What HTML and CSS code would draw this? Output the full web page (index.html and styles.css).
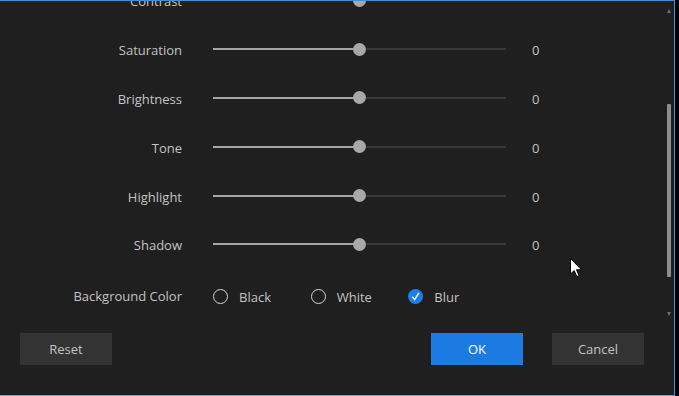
FILE: index.html
```html
<!DOCTYPE html>
<html lang="en">
<head>
    <meta charset="UTF-8">
    <title>Adjust</title>
    <link rel="stylesheet" href="styles.css">
</head>
<body>
    <div class="dialog">
        <div class="main">
            <div class="scroll-area">
                <div class="rows">
                    <div class="row">
                        <span class="label">Contrast</span>
                        <div class="slider"><span class="fill"></span><span class="thumb"></span><span class="rest"></span></div>
                        <span class="value"></span>
                    </div>
                    <div class="row">
                        <span class="label">Saturation</span>
                        <div class="slider"><span class="fill"></span><span class="thumb"></span><span class="rest"></span></div>
                        <span class="value">0</span>
                    </div>
                    <div class="row">
                        <span class="label">Brightness</span>
                        <div class="slider"><span class="fill"></span><span class="thumb"></span><span class="rest"></span></div>
                        <span class="value">0</span>
                    </div>
                    <div class="row">
                        <span class="label">Tone</span>
                        <div class="slider"><span class="fill"></span><span class="thumb"></span><span class="rest"></span></div>
                        <span class="value">0</span>
                    </div>
                    <div class="row">
                        <span class="label">Highlight</span>
                        <div class="slider"><span class="fill"></span><span class="thumb"></span><span class="rest"></span></div>
                        <span class="value">0</span>
                    </div>
                    <div class="row">
                        <span class="label">Shadow</span>
                        <div class="slider"><span class="fill"></span><span class="thumb"></span><span class="rest"></span></div>
                        <span class="value">0</span>
                    </div>
                    <div class="row bg-row">
                        <span class="label">Background Color</span>
                        <div class="options">
                            <label class="option"><span class="radio"></span>Black</label>
                            <label class="option"><span class="radio"></span>White</label>
                            <label class="option"><span class="radio checked"><svg width="15" height="15" viewBox="0 0 15 15"><path d="M4.2 7.6 L6.6 10.6 L10.9 3.8" fill="none" stroke="#fff" stroke-width="1.3"/></svg></span>Blur</label>
                        </div>
                    </div>
                </div>
            </div>
            <div class="scrollbar">
                <span class="arrow up"></span>
                <span class="thumb-bar"></span>
                <span class="arrow down"></span>
            </div>
        </div>
        <div class="footer">
            <button class="btn">Reset</button>
            <span class="spacer"></span>
            <button class="btn primary">OK</button>
            <button class="btn">Cancel</button>
        </div>
        <svg class="cursor" width="13" height="20" viewBox="0 0 13 20"><path d="M0.5 0.5 L0.5 16 L4.2 12.6 L6.8 18.6 L9 17.6 L6.5 11.8 L11.5 11.8 Z" fill="#fff" stroke="#000" stroke-width="1"/></svg>
    </div>
</body>
</html>
```

FILE: styles.css
```css
body {
    margin: 0;
    background-color: #000;
    font-family: "Open Sans", "Noto Sans", sans-serif;
    font-size: 13px;
}
.dialog {
    position: relative;
    width: 675px;
    height: 396px;
    box-sizing: border-box;
    background-color: #1f1f1f;
    border-top: 1px solid #3f8fde;
    border-right: 1px solid #3f8fde;
    border-bottom: 1px solid #6aa6dc;
    display: flex;
    flex-direction: column;
}
.main {
    display: flex;
    height: 321px;
}
.scroll-area {
    flex: 1;
    overflow: hidden;
}
.rows {
    margin-top: -24px;
}
.row {
    display: grid;
    grid-template-columns: 182px 293px auto;
    column-gap: 31px;
    align-items: center;
    height: 48.8px;
}
.label {
    text-align: right;
    color: #c3c3c3;
}
.value {
    color: #c3c3c3;
    margin-left: -5px;
}
.slider {
    display: flex;
    align-items: center;
    height: 13px;
    margin-bottom: 2px;
}
.fill {
    flex: 1;
    height: 2px;
    background-color: #a6a6a6;
}
.rest {
    flex: 1;
    height: 2px;
    background-color: #383838;
}
.thumb {
    position: relative;
    z-index: 1;
    width: 13px;
    height: 13px;
    margin: 0 -6.5px;
    border-radius: 50%;
    background-color: #a8a8a8;
}
.bg-row {
    height: 52px;
}
.options {
    display: flex;
    margin-top: 2px;
}
.option {
    display: flex;
    align-items: center;
    gap: 11px;
    width: 98px;
    color: #c3c3c3;
}
.radio {
    width: 15px;
    height: 15px;
    box-sizing: border-box;
    border: 1.5px solid #d4d4d4;
    border-radius: 50%;
}
.radio.checked {
    border: none;
    background-color: #1c7fe6;
}
.radio svg {
    display: block;
}
.scrollbar {
    width: 10px;
    display: flex;
    flex-direction: column;
    align-items: center;
    padding: 8px 0 6px;
    box-sizing: border-box;
}
.arrow {
    width: 0;
    height: 0;
    border-left: 2.5px solid transparent;
    border-right: 2.5px solid transparent;
}
.arrow.up {
    border-bottom: 4px solid #6c6c6c;
}
.arrow.down {
    margin-top: auto;
    border-top: 4px solid #6c6c6c;
}
.thumb-bar {
    width: 4px;
    height: 173px;
    margin-top: 91px;
    border-radius: 1px;
    background-color: #8c8c8c;
}
.footer {
    display: flex;
    gap: 29px;
    margin-top: 11px;
    padding: 0 30px 0 20px;
}
.spacer {
    flex: 1;
}
.btn {
    width: 92px;
    height: 32px;
    border: none;
    background-color: #333333;
    color: #c3c3c3;
    font-family: inherit;
    font-size: 13px;
    padding: 0;
}
.btn.primary {
    background-color: #1b7be3;
    color: #fff;
}
.cursor {
    position: absolute;
    left: 570px;
    top: 257px;
}
```
